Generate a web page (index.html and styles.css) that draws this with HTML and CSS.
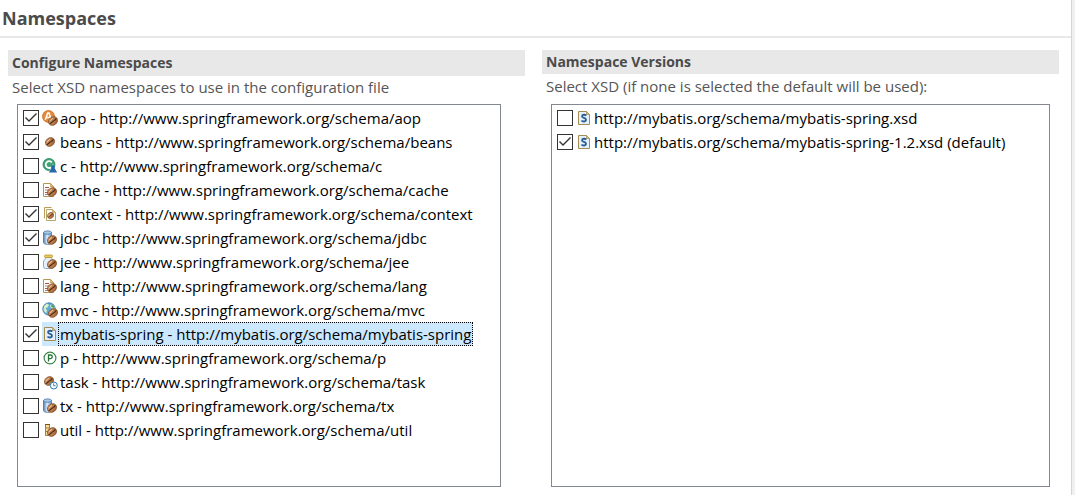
FILE: index.html
```html
<!DOCTYPE html>
<html lang="en">
<head>
<meta charset="utf-8">
<title>Namespaces</title>
<link rel="stylesheet" href="styles.css">
</head>
<body>
<svg class="defs" aria-hidden="true">
  <defs>
    <linearGradient id="brown" x1="0" y1="0" x2="1" y2="1"><stop offset="0" stop-color="#dda878"/><stop offset="1" stop-color="#97562a"/></linearGradient>
    <linearGradient id="can" x1="0" y1="0" x2="1" y2="0"><stop offset="0" stop-color="#4f7fb5"/><stop offset=".45" stop-color="#dcecfa"/><stop offset="1" stop-color="#6c9bcd"/></linearGradient>
    <symbol id="bean" viewBox="0 0 10 10">
      <ellipse cx="5" cy="5" rx="4.8" ry="4" transform="rotate(-38 5 5)" fill="url(#brown)" stroke="#85502a" stroke-width=".8"/>
      <path d="M1.700 7.800C3.300 7.300 3.700 5.900 5 5.200S7.500 3.900 8.300 2.200" fill="none" stroke="#4c2409" stroke-width="1.100"/>
      <path d="M2 5 5 2.200" fill="none" stroke="#f3d1ab" stroke-width=".8"/>
    </symbol>
    <symbol id="aop" viewBox="0 0 16 16">
      <circle cx="6.500" cy="6.500" r="6" fill="#e58a3c" stroke="#cb6c20" stroke-width=".8"/>
      <path d="M3.300 9.800 5.700 3h1.300l2.400 6.800M4.500 7.500h4" fill="none" stroke="#fff" stroke-width="1.500"/>
      <use href="#bean" x="6" y="6" width="10" height="10"/>
    </symbol>
    <symbol id="beans" viewBox="0 0 16 16"><use href="#bean" x="3" y="3" width="10" height="10"/></symbol>
    <symbol id="c" viewBox="0 0 16 16">
      <circle cx="7" cy="6.500" r="6" fill="#3fa374" stroke="#25845a" stroke-width=".8"/>
      <path d="M9.800 4.500A3.400 3.400 0 1 0 9.800 8.700" fill="none" stroke="#fff" stroke-width="1.800"/>
      <path d="M11 6 15.800 15.500H6.200z" fill="#fff"/><circle cx="11" cy="9" r="2" fill="#2867a8"/><path d="M6.800 14.500 9.500 10h3l2.700 4.500z" fill="#2867a8"/>
    </symbol>
    <symbol id="cache" viewBox="0 0 16 16">
      <path d="M1.500 1.500h7l3 3v10h-10z" fill="#fffdf4" stroke="#b69658"/><path d="M8.500 1.500v3h3z" fill="#e6c276" stroke="#b69658" stroke-width=".7"/>
      <path d="M3 5.500h4M3 10.500h3" stroke="#bb5146"/><path d="M3 8h6M3 12.500h4" stroke="#8d8d9b"/>
      <use href="#bean" x="5" y="5" width="10" height="10"/>
    </symbol>
    <symbol id="context" viewBox="0 0 16 16">
      <path d="M2.500 12.500v-11h7" fill="#fffbed" stroke="#bd9c55"/><path d="M4.500 3.500h6l3 3v8h-9z" fill="#fffdf4" stroke="#b5a670"/>
      <path d="M10.500 3.500v3h3z" fill="#e6c276" stroke="#bd9c55" stroke-width=".7"/>
      <use href="#bean" x="5" y="6" width="7" height="7"/>
    </symbol>
    <symbol id="jdbc" viewBox="0 0 16 16">
      <path d="M1.500 2.500v10c0 2.400 8 2.400 8 0v-10" fill="url(#can)" stroke="#41709f" stroke-width=".8"/>
      <ellipse cx="5.500" cy="2.600" rx="4" ry="1.700" fill="#a8caea" stroke="#41709f" stroke-width=".8"/>
      <use href="#bean" x="5" y="5" width="10" height="10"/>
    </symbol>
    <symbol id="jee" viewBox="0 0 16 16">
      <path d="M3.500 3.500c0 2-2 2.400-2 4.500v4.500q0 2 2 2h6q2 0 2-2V8c0-2.100-2-2.500-2-4.500z" fill="#e5f0fa" stroke="#829dbd" stroke-width=".9"/>
      <rect x="2.500" y="1" width="8" height="2.500" rx="1" fill="#ecc85b" stroke="#b9952d" stroke-width=".8"/>
      <use href="#bean" x="5" y="5" width="10" height="10"/>
    </symbol>
    <symbol id="mvc" viewBox="0 0 16 16">
      <circle cx="7" cy="7" r="6.200" fill="#5eaad8" stroke="#2f6c9e" stroke-width=".8"/>
      <path d="M2 4 5 1.500 7 3 5.500 5.500 3.500 6 5 8.500 4 11.500 1.500 8zM9 2l3 2 .8 3-3-.5L8 4.500z" fill="#d9efc4"/><path d="M9 2 12 4v2L9.500 5z" fill="#4c9955"/>
      <use href="#bean" x="6" y="6" width="10" height="10"/>
    </symbol>
    <symbol id="xsd" viewBox="0 0 16 16">
      <path d="M2.500 1.500h8l3 3v10h-11z" fill="#e4f1fc" stroke="#a58b51"/><path d="M10.500 1.500v3h3z" fill="#edc46a" stroke="#a58b51" stroke-width=".7"/>
      <path d="M10.200 5.600C9.200 4.400 6 4.300 6 6.300 6 8.400 10 7.500 10 9.800 10 12 6.600 11.900 5.500 10.500" fill="none" stroke="#2c5e96" stroke-width="1.800"/>
    </symbol>
    <symbol id="p" viewBox="0 0 16 16">
      <circle cx="8" cy="8" r="5.900" fill="#fff" stroke="#3b8546" stroke-width="1.200"/>
      <path d="M6.500 11.500V5h2a1.800 1.800 0 0 1 0 3.600h-2" fill="none" stroke="#28733a" stroke-width="1.300"/>
    </symbol>
    <symbol id="task" viewBox="0 0 16 16">
      <use href="#bean" x="2" y="2" width="10" height="10"/>
      <circle cx="11.800" cy="11.500" r="3.500" fill="#fff" stroke="#2e75ad"/><path d="M11.700 9.300v2.500h2" fill="none" stroke="#2e75ad" stroke-width=".9"/>
    </symbol>
    <symbol id="util" viewBox="0 0 16 16">
      <path d="M3.500 2.500h4v11h-4zM3.500 6h4M3.500 9.500h4" fill="#f4dda0" stroke="#a97e31"/><path d="M3 2.500h5" stroke="#7b5719"/>
      <use href="#bean" x="5" y="5" width="10" height="10"/>
    </symbol>
  </defs>
</svg>
<main class="page">
  <h1 class="title">Namespaces</h1>
  <div class="columns">
    <section class="panel panel-configure">
      <h2 class="panel-title">Configure Namespaces</h2>
      <p class="hint">Select XSD namespaces to use in the configuration file</p>
      <div class="list">
        <label class="row"><input class="check" type="checkbox" checked><svg class="icon"><use href="#aop"/></svg><span class="name">aop - http://www.springframework.org/schema/aop</span></label>
        <label class="row"><input class="check" type="checkbox" checked><svg class="icon"><use href="#beans"/></svg><span class="name">beans - http://www.springframework.org/schema/beans</span></label>
        <label class="row"><input class="check" type="checkbox"><svg class="icon"><use href="#c"/></svg><span class="name">c - http://www.springframework.org/schema/c</span></label>
        <label class="row"><input class="check" type="checkbox"><svg class="icon"><use href="#cache"/></svg><span class="name">cache - http://www.springframework.org/schema/cache</span></label>
        <label class="row"><input class="check" type="checkbox" checked><svg class="icon"><use href="#context"/></svg><span class="name">context - http://www.springframework.org/schema/context</span></label>
        <label class="row"><input class="check" type="checkbox" checked><svg class="icon"><use href="#jdbc"/></svg><span class="name">jdbc - http://www.springframework.org/schema/jdbc</span></label>
        <label class="row"><input class="check" type="checkbox"><svg class="icon"><use href="#jee"/></svg><span class="name">jee - http://www.springframework.org/schema/jee</span></label>
        <label class="row"><input class="check" type="checkbox"><svg class="icon"><use href="#cache"/></svg><span class="name">lang - http://www.springframework.org/schema/lang</span></label>
        <label class="row"><input class="check" type="checkbox"><svg class="icon"><use href="#mvc"/></svg><span class="name">mvc - http://www.springframework.org/schema/mvc</span></label>
        <label class="row selected"><input class="check" type="checkbox" checked><svg class="icon"><use href="#xsd"/></svg><span class="name">mybatis-spring - http://mybatis.org/schema/mybatis-spring</span></label>
        <label class="row"><input class="check" type="checkbox"><svg class="icon"><use href="#p"/></svg><span class="name">p - http://www.springframework.org/schema/p</span></label>
        <label class="row"><input class="check" type="checkbox"><svg class="icon"><use href="#task"/></svg><span class="name">task - http://www.springframework.org/schema/task</span></label>
        <label class="row"><input class="check" type="checkbox"><svg class="icon"><use href="#jdbc"/></svg><span class="name">tx - http://www.springframework.org/schema/tx</span></label>
        <label class="row"><input class="check" type="checkbox"><svg class="icon"><use href="#util"/></svg><span class="name">util - http://www.springframework.org/schema/util</span></label>
      </div>
    </section>
    <section class="panel panel-versions">
      <h2 class="panel-title">Namespace Versions</h2>
      <p class="hint">Select XSD (if none is selected the default will be used):</p>
      <div class="list">
        <label class="row"><input class="check" type="checkbox"><svg class="icon"><use href="#xsd"/></svg><span class="name">http://mybatis.org/schema/mybatis-spring.xsd</span></label>
        <label class="row"><input class="check" type="checkbox" checked><svg class="icon"><use href="#xsd"/></svg><span class="name">http://mybatis.org/schema/mybatis-spring-1.2.xsd (default)</span></label>
      </div>
    </section>
  </div>
</main>
</body>
</html>
```

FILE: styles.css
```css
* { box-sizing: border-box; }

body {
  margin: 0;
  padding-right: 3px;
  background: #f0f0f0;
  color: #000;
  font: 15px/24px "Open Sans", "Noto Sans", sans-serif;
}

.defs { display: block; width: 0; height: 0; }

.page {
  display: flex;
  flex-direction: column;
  min-height: 100vh;
  background: #fff;
  border-right: 1px solid #d4d4d4;
}

.title {
  margin: 0;
  padding: 0 2px;
  border-bottom: 2px solid #e8e8e8;
  color: #4b4b4b;
  font-size: 18px;
  font-weight: 700;
  line-height: 36px;
}

.columns {
  display: grid;
  flex: 1;
  grid-template-columns: 1fr 1fr;
  gap: 17px;
  padding: 12px 12px 8px 8px;
}

.panel { display: flex; flex-direction: column; min-width: 0; }

.panel-title {
  margin: 0;
  padding: 0 4px;
  background: #e8e8e8;
  color: #4b4b4b;
  font-size: 14px;
  font-weight: 700;
  line-height: 24px;
}

.panel-configure .panel-title { line-height: 26px; }

.hint {
  margin: 0;
  padding: 0 4px;
  color: #555;
  font-size: 15px;
  line-height: 24px;
}

.panel-configure .hint { line-height: 22px; }

.list {
  flex: 1;
  margin: 6px 9px 0;
  padding: 1px 5px;
  border: 1px solid #828790;
}

.panel-configure .list { margin-right: 24px; }

.row { display: flex; align-items: center; height: 24px; }

.check {
  appearance: none;
  flex: none;
  width: 16px;
  height: 16px;
  margin: 0 3px 0 0;
  border: 1px solid #333;
  background: #fff;
}

.check:checked::before {
  content: "";
  display: block;
  width: 14px;
  height: 14px;
  background: #333;
  clip-path: polygon(1px 7px, 2px 6px, 5px 9px, 12px 2px, 13px 3px, 5px 11px);
}

.icon { flex: none; width: 16px; height: 16px; }

.name {
  margin-left: 1px;
  padding: 0 1px;
  line-height: 22px;
  white-space: nowrap;
}

.selected .icon { height: 24px; padding: 4px 0; background: #cce8ff; }

.selected .name {
  margin-left: 0;
  padding: 0 1px;
  border: 1px dotted #000;
  background: #cce8ff;
}
```
